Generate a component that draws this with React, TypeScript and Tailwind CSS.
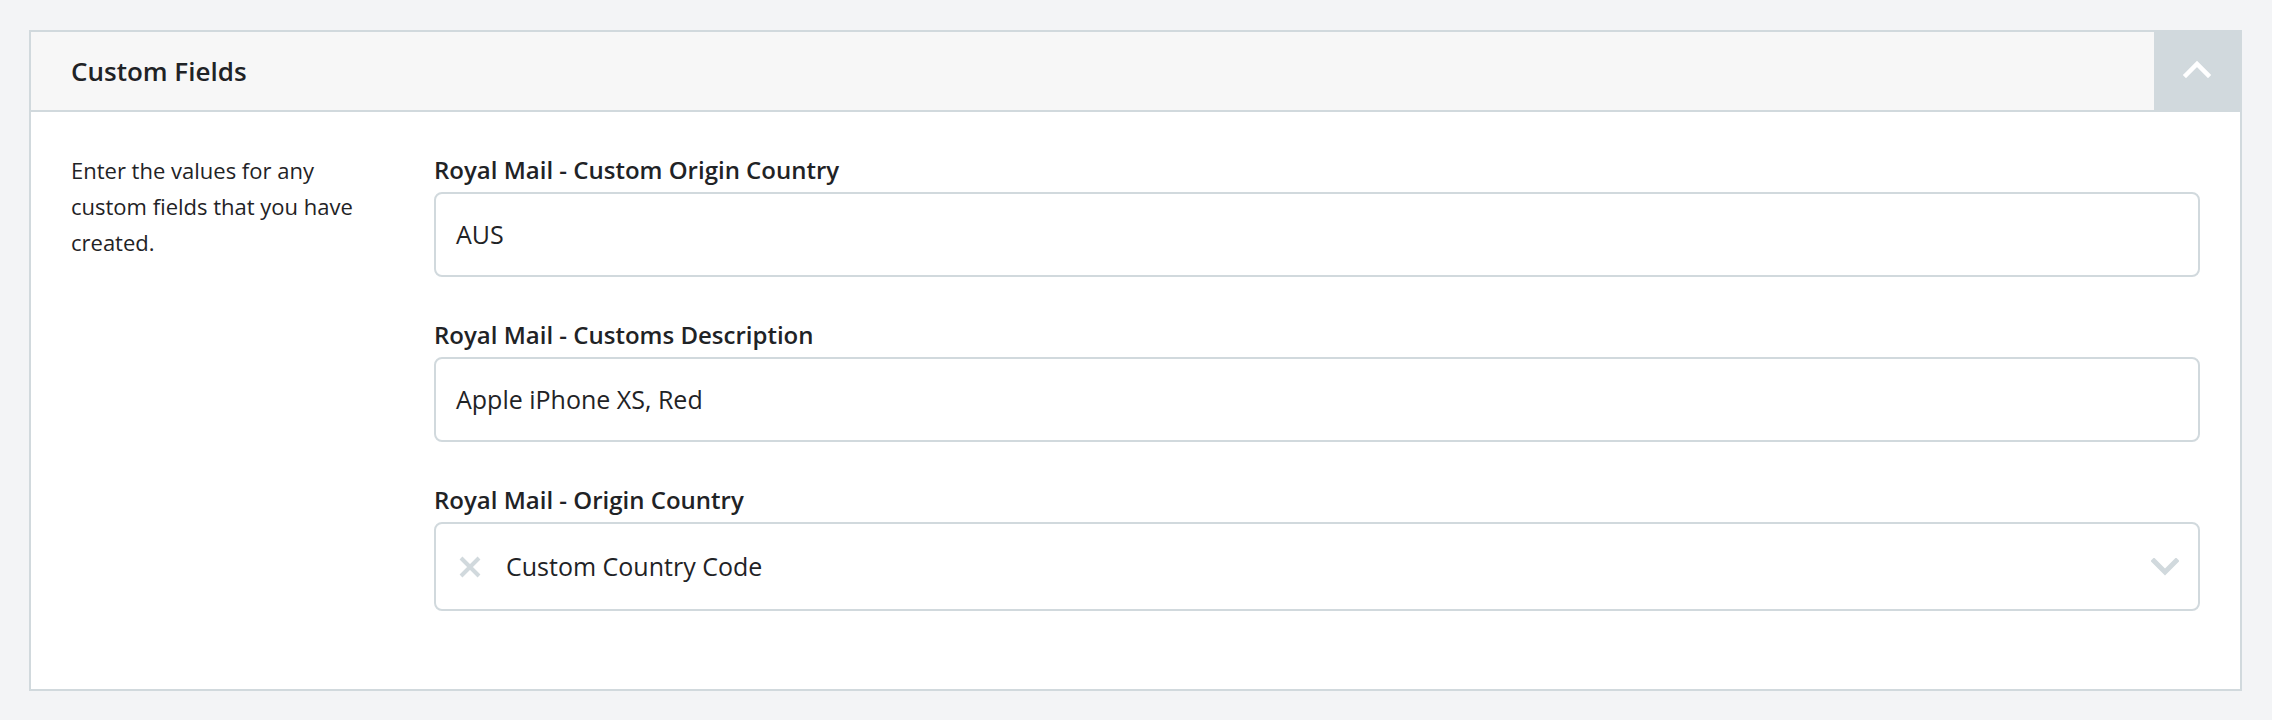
import React from 'react';

const font = { fontFamily: '"Open Sans", Lato, sans-serif' };

const ChevronUp = () => (
  <svg width="28" height="18" viewBox="0 0 28 18" fill="none">
    <polyline points="3,15 14,4 25,15" stroke="#ffffff" strokeWidth="4.5" strokeLinecap="square" />
  </svg>
);

const ChevronDown = () => (
  <svg width="28" height="18" viewBox="0 0 28 18" fill="none">
    <polyline points="3,3 14,14 25,3" stroke="#d1d9dd" strokeWidth="5" strokeLinecap="square" />
  </svg>
);

const Cross = () => (
  <svg width="24" height="24" viewBox="0 0 24 24" fill="none">
    <path d="M3 3 L21 21 M21 3 L3 21" stroke="#d1d9dd" strokeWidth="4" />
  </svg>
);

interface FieldProps {
  label: string;
  children: React.ReactNode;
}

const Field: React.FC<FieldProps> = ({ label, children }) => (
  <div className="mb-[44px] last:mb-0">
    <div className="text-[24px] leading-[28px] font-semibold text-[#1f2326] mb-[8px]">{label}</div>
    {children}
  </div>
);

export default function App() {
  return (
    <div className="min-h-screen bg-[#f3f4f6] pt-[30px] pl-[29px] pr-[30px]" style={font}>
      <div className="border-2 border-[#d1d9dd] bg-white">
        {/* Header */}
        <div className="flex items-stretch h-[80px] bg-[#f7f7f7] border-b-2 border-[#d1d9dd]">
          <div className="flex-1 flex items-center pl-[40px]">
            <h2 className="text-[26px] font-semibold text-[#1f2326]">Custom Fields</h2>
          </div>
          <button className="w-[86px] bg-[#d1d9dd] flex items-center justify-center pb-[4px]">
            <ChevronUp />
          </button>
        </div>

        {/* Body */}
        <div className="flex px-[40px] pt-[40px] pb-[78px]">
          <div className="w-[363px] shrink-0">
            <p className="w-[310px] text-[22px] leading-[36px] text-[#1f2326]">
              Enter the values for any custom fields that you have created.
            </p>
          </div>
          <div className="flex-1 pt-[4px]">
            <Field label="Royal Mail - Custom Origin Country">
              <div className="h-[85px] border-2 border-[#d1d9dd] rounded-[8px] flex items-center px-[20px] text-[25px] text-[#1f2326]">
                AUS
              </div>
            </Field>
            <Field label="Royal Mail - Customs Description">
              <div className="h-[85px] border-2 border-[#d1d9dd] rounded-[8px] flex items-center px-[20px] text-[25px] text-[#1f2326]">
                Apple iPhone XS, Red
              </div>
            </Field>
            <Field label="Royal Mail - Origin Country">
              <div className="h-[89px] border-2 border-[#d1d9dd] rounded-[8px] flex items-center pl-[22px] pr-[19px] text-[25px] text-[#1f2326]">
                <Cross />
                <span className="ml-[24px] flex-1">Custom Country Code</span>
                <ChevronDown />
              </div>
            </Field>
          </div>
        </div>
      </div>
    </div>
  );
}
